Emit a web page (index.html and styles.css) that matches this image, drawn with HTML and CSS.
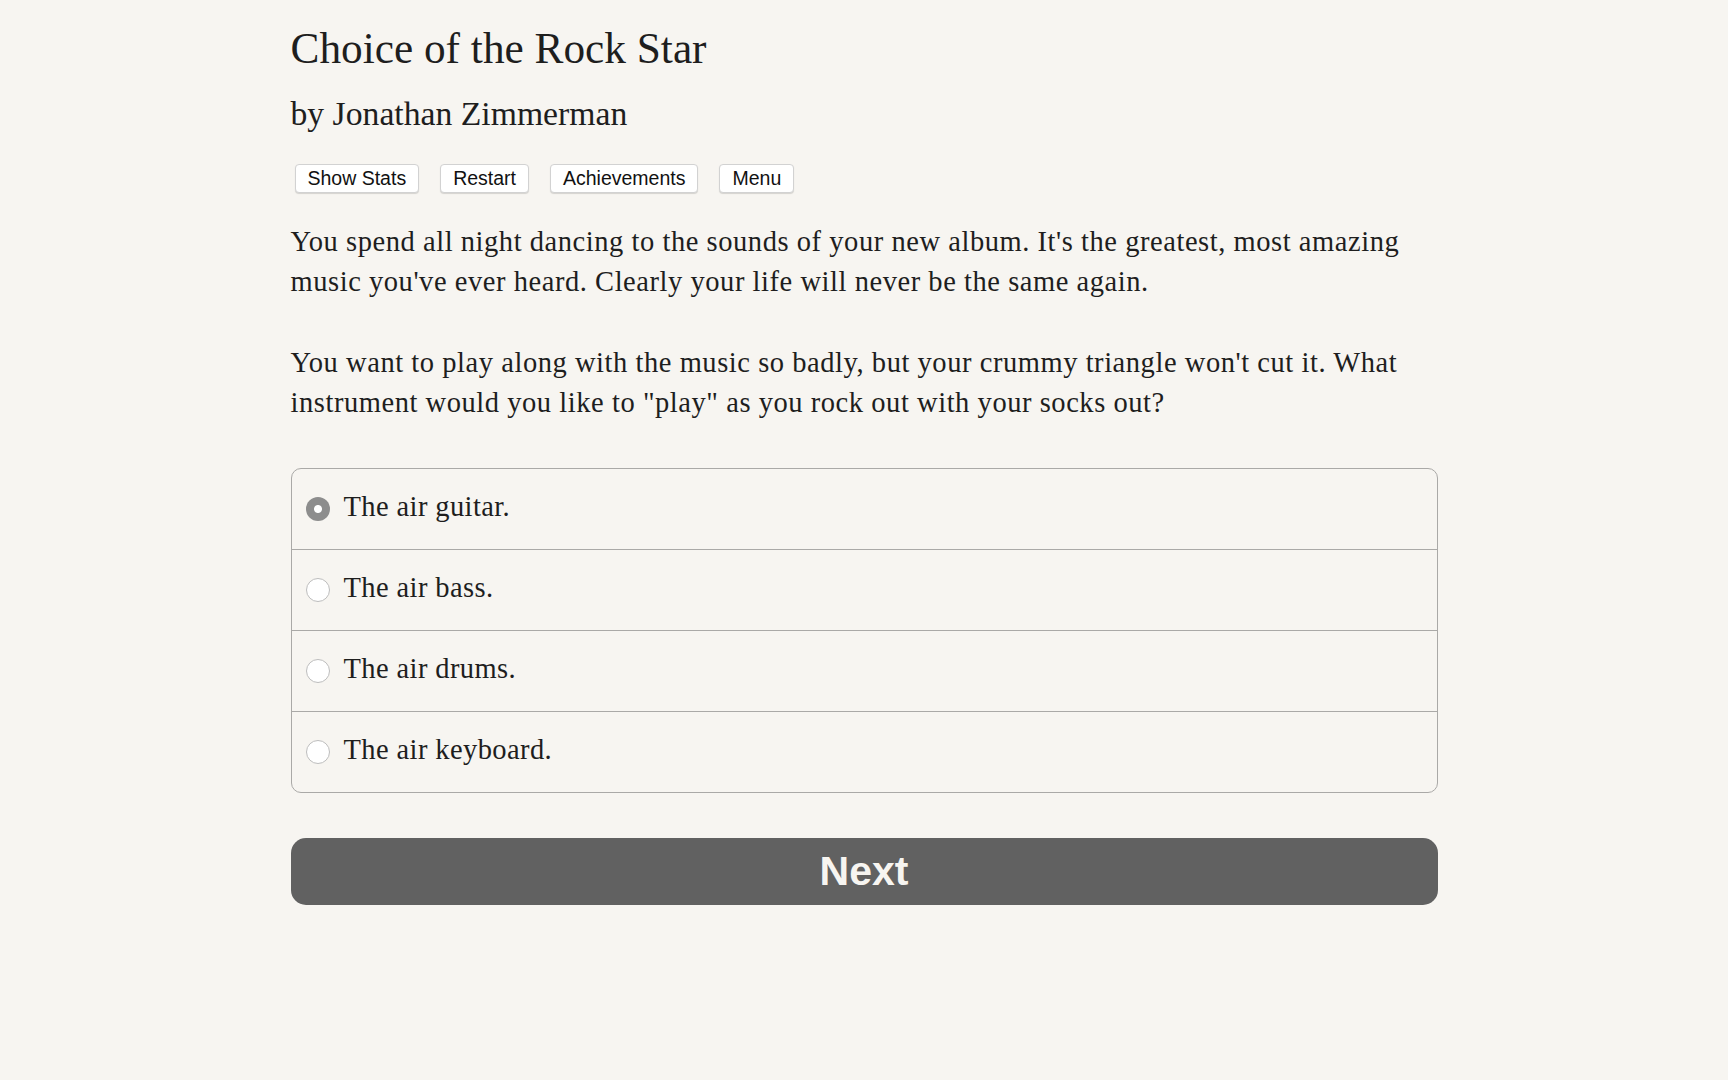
FILE: index.html
```html
<!DOCTYPE html>
<html lang="en">
<head>
<meta charset="utf-8">
<title>Choice of the Rock Star</title>
<link rel="stylesheet" href="styles.css">
</head>
<body>
<main class="page">
  <h1 class="title">Choice of the Rock Star</h1>
  <h2 class="author">by Jonathan Zimmerman</h2>
  <nav class="toolbar">
    <button class="tool-btn">Show Stats</button>
    <button class="tool-btn">Restart</button>
    <button class="tool-btn">Achievements</button>
    <button class="tool-btn">Menu</button>
  </nav>
  <div class="story">
    <p>You spend all night dancing to the sounds of your new album. It's the greatest, most amazing music you've ever heard. Clearly your life will never be the same again.</p>
    <p>You want to play along with the music so badly, but your crummy triangle won't cut it. What instrument would you like to "play" as you rock out with your socks out?</p>
  </div>
  <form class="choices">
    <label class="choice"><span class="radio checked"></span><span class="choice-text">The air guitar.</span></label>
    <label class="choice"><span class="radio"></span><span class="choice-text">The air bass.</span></label>
    <label class="choice"><span class="radio"></span><span class="choice-text">The air drums.</span></label>
    <label class="choice"><span class="radio"></span><span class="choice-text">The air keyboard.</span></label>
  </form>
  <button class="next-btn">Next</button>
</main>
</body>
</html>
```
FILE: styles.css
```css
html, body {
  margin: 0;
  padding: 0;
  background: #f7f5f1;
}
body {
  font-family: "Liberation Serif", "DejaVu Serif", serif;
  color: #1e1e1e;
}
.page {
  width: 1147px;
  margin: 0 auto;
  padding-top: 22px;
  display: flex;
  flex-direction: column;
}
.title {
  margin: 0;
  font-weight: normal;
  font-size: 43.3px;
  line-height: 52px;
  color: #1e1e1e;
}
.author {
  margin: 20px 0 0;
  font-weight: normal;
  font-size: 33.7px;
  line-height: 40px;
  color: #1e1e1e;
}
.toolbar {
  display: flex;
  gap: 21px;
  margin: 30px 0 0 4px;
}
.tool-btn {
  font-family: "Liberation Sans", Arial, sans-serif;
  font-size: 19.5px;
  height: 29px;
  padding: 0 12px;
  background: #fff;
  color: #111;
  border: 1px solid #d2d2d2;
  border-radius: 4px;
  box-shadow: 0 1px 1px rgba(0,0,0,0.14);
}
.story {
  margin-top: 29px;
  display: flex;
  flex-direction: column;
  gap: 41px;
}
.story p {
  margin: 0;
  font-size: 28.5px;
  letter-spacing: 0.55px;
  line-height: 40px;
}
.choices {
  margin-top: 45px;
  border: 1px solid #aaa9a7;
  border-radius: 10px;
  display: flex;
  flex-direction: column;
}
.choice {
  display: flex;
  align-items: center;
  height: 80px;
  padding-left: 14px;
  gap: 14px;
  font-size: 28.5px;
  letter-spacing: 0.4px;
}
.choice + .choice {
  border-top: 1px solid #aaa9a7;
}
.choice-text {
  position: relative;
  top: -2px;
}
.radio {
  width: 22px;
  height: 22px;
  border-radius: 50%;
  border: 1px solid #bdbdbd;
  background: #fff;
  flex: none;
}
.radio.checked {
  width: 24px;
  height: 24px;
  border: none;
  background: radial-gradient(circle, #fff 0 3.5px, #8d8d8d 4.5px);
}
.next-btn {
  margin-top: 45px;
  height: 67px;
  border: none;
  border-radius: 15px;
  background: #616161;
  color: #f7f5f1;
  font-family: "Liberation Sans", Arial, sans-serif;
  font-weight: bold;
  font-size: 41px;
}
```
